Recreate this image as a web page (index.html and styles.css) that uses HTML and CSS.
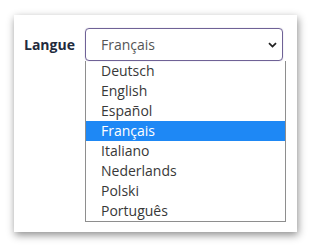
FILE: index.html
```html
<!DOCTYPE html>
<html lang="fr">
<head>
    <meta charset="UTF-8">
    <meta name="viewport" content="width=device-width, initial-scale=1.0">
    <title>Langue</title>
    <link rel="stylesheet" href="styles.css">
</head>
<body>
    <div class="card">
        <div class="form-row">
            <label class="field-label" for="langue">Langue</label>
            <div class="field">
                <div class="select-box" id="langue">
                    <span>Français</span>
                    <svg class="chevron" width="9" height="6" viewBox="0 0 9 6">
                        <path d="M1 1.2 L4.5 4.6 L8 1.2" fill="none" stroke="#222" stroke-width="1.8"/>
                    </svg>
                </div>
                <ul class="options">
                    <li>Deutsch</li>
                    <li>English</li>
                    <li>Español</li>
                    <li class="selected">Français</li>
                    <li>Italiano</li>
                    <li>Nederlands</li>
                    <li>Polski</li>
                    <li>Português</li>
                </ul>
            </div>
        </div>
    </div>
</body>
</html>
```

FILE: styles.css
```css
body {
    font-family: "Open Sans", Arial, sans-serif;
    margin: 0;
    padding: 15px 13px 15px 14px;
    background-color: #fff;
}

.card {
    width: 283px;
    height: 217px;
    box-sizing: border-box;
    padding: 13px 14px 10px 10px;
    background: #fff;
    box-shadow: 1px 3px 8px rgba(0, 0, 0, 0.45);
}

.form-row {
    display: flex;
}

.field-label {
    width: 61px;
    padding-top: 7px;
    font-size: 14px;
    font-weight: bold;
    color: #1f2b3d;
}

.field {
    width: 198px;
}

.select-box {
    height: 33px;
    box-sizing: border-box;
    display: flex;
    align-items: center;
    justify-content: space-between;
    padding: 0 5px 0 15px;
    border: 1px solid #6f6296;
    border-radius: 4px;
    box-shadow: 0 0 1px rgba(111, 98, 150, 0.6);
    font-size: 14px;
    color: #555;
}

.options {
    list-style: none;
    margin: 0;
    padding: 0;
    width: 199px;
    border: 1px solid #8e8e8e;
    border-top: none;
    font-size: 14px;
    color: #383838;
}

.options li {
    height: 20px;
    line-height: 20px;
    padding-left: 15px;
}

.options .selected {
    background: #1e88f5;
    color: #fff;
}
```
